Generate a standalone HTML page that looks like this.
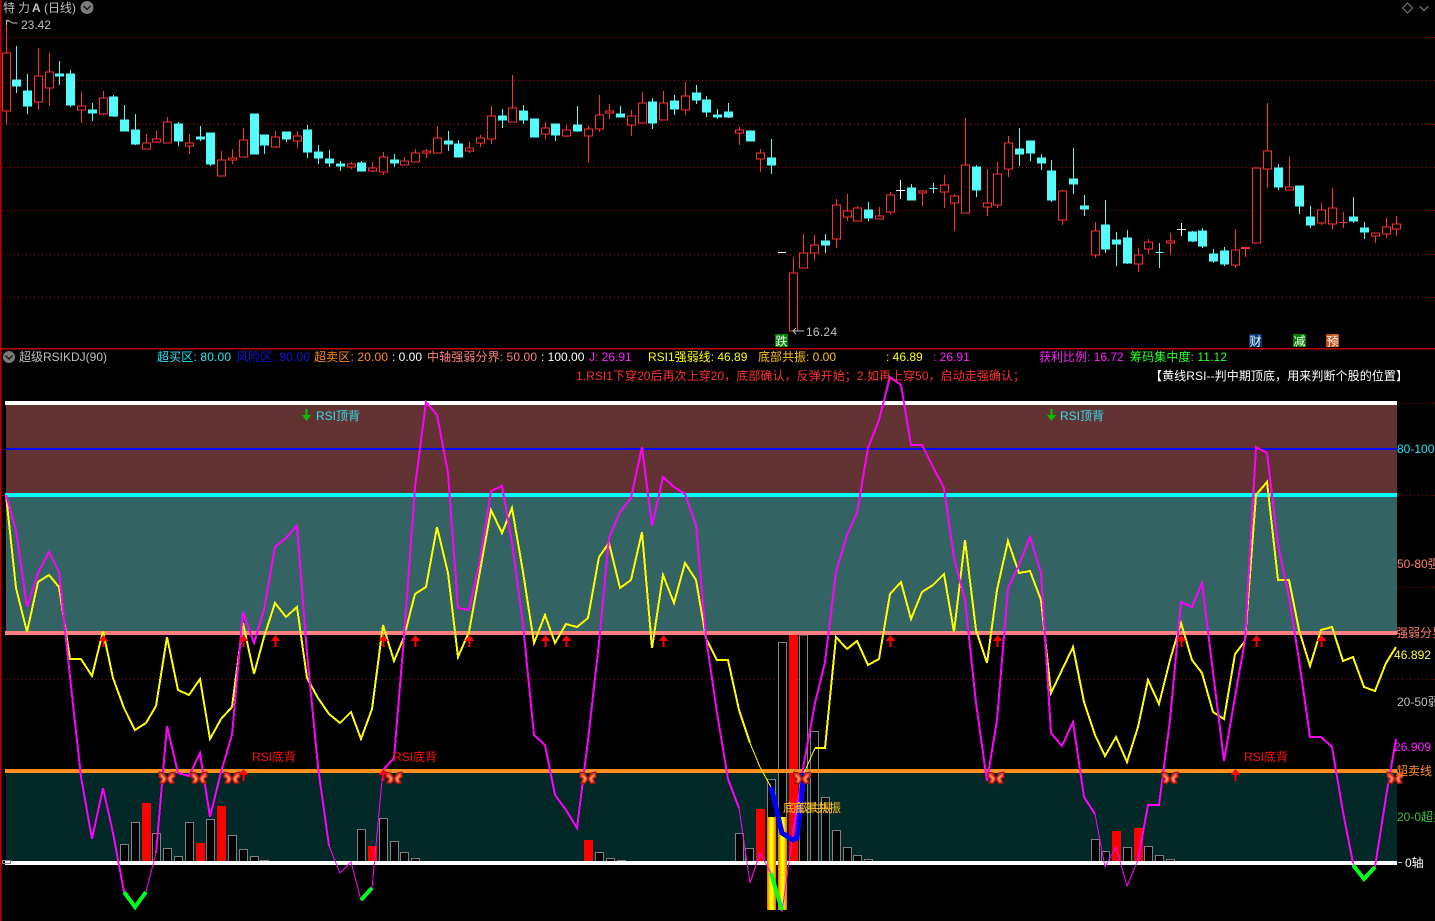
<!DOCTYPE html>
<html lang="zh">
<head>
<meta charset="utf-8">
<title>超级RSIKDJ</title>
<style>
html,body{margin:0;padding:0;background:#000;width:1435px;height:921px;overflow:hidden}
svg{display:block;position:absolute;left:0;top:0}
text{font-family:"Liberation Sans","WenQuanYi Zen Hei","Noto Sans CJK SC",sans-serif;font-size:12px;white-space:pre}
.c path,.c line,.c polyline,.c rect{shape-rendering:crispEdges}
polyline{fill:none;stroke-linejoin:miter}
</style>
</head>
<body>
<svg width="1435" height="921" viewBox="0 0 1435 921" xmlns="http://www.w3.org/2000/svg">
<defs>
<linearGradient id="gold" x1="0" x2="1" y1="0" y2="0">
<stop offset="0" stop-color="#d87000"/><stop offset=".2" stop-color="#ffb000"/><stop offset=".4" stop-color="#ffff00"/><stop offset=".6" stop-color="#ffff00"/><stop offset=".8" stop-color="#ffb000"/><stop offset="1" stop-color="#d87000"/>
</linearGradient>
<g id="b">
<path d="M0 0L-3 -5L-8 -6L-8.500 -1L-5.500 1L-7.500 5L-3 6L0 2Z M0 0L3 -5L8 -6L8.500 -1L5.500 1L7.500 5L3 6L0 2Z" fill="#e0361e" stroke="#8a1410" stroke-width="1"/>
<path d="M-1.500 0L-6 -4L-6.500 -2L-4 .5L-5 3.500L-3 4Z M1.500 0L6 -4L6.500 -2L4 .5L5 3.500L3 4Z" fill="#ff8a66"/>
</g>
<path id="u" d="M0 0L5 6H1V12H-1V6H-5Z" fill="#ff0000"/>
</defs>
<rect width="1435" height="921" fill="#000"/>
<g class="c">
<!-- upper grid -->
<g stroke="#a81010" stroke-width="1" stroke-dasharray="1 3">
<line x1="2" x2="1435" y1="37.500" y2="37.500"/>
<line x1="2" x2="1435" y1="80.500" y2="80.500"/>
<line x1="2" x2="1435" y1="124.500" y2="124.500"/>
<line x1="2" x2="1435" y1="167.500" y2="167.500"/>
<line x1="2" x2="1435" y1="210.500" y2="210.500"/>
<line x1="2" x2="1435" y1="254.500" y2="254.500"/>
<line x1="2" x2="1435" y1="297.500" y2="297.500"/>
</g>
<!-- red candles -->
<path fill="#000" stroke="#ff3232" stroke-width="1" d="M6.500 20V53M6.500 111V124M2.500 53h8V111h-8Z
M38.500 48V76M38.500 102V110M34.500 76h8V102h-8Z
M49.500 53V72M49.500 88V106M45.500 72h8V88h-8Z
M81.500 92V106M81.500 110V123M77.500 106h8V110h-8Z
M103.500 91V98M103.500 114V115M99.500 98h8V114h-8Z
M146.500 134V143M142.500 143h8V149h-8Z
M156.500 131V139M156.500 142V143M152.500 139h8V142h-8Z
M167.500 117V122M163.500 122h8V143h-8Z
M189.500 134V143M189.500 146V154M185.500 143h8V146h-8Z
M221.500 151V160M217.500 160h8V176h-8Z
M232.500 149V158M232.500 160V164M228.500 158h8V160h-8Z
M243.500 128V140M239.500 140h8V157h-8Z
M275.500 131V137M275.500 147V148M271.500 137h8V147h-8Z
M297.500 131V136M297.500 141V148M293.500 136h8V141h-8Z
M351.500 162V164M351.500 167V169M347.500 164h8V167h-8Z
M372.500 162V168M372.500 171V172M368.500 168h8V171h-8Z
M383.500 152V157M383.500 172V175M379.500 157h8V172h-8Z
M404.500 157V161M400.500 161h8V165h-8Z
M415.500 149V153M411.500 153h8V162h-8Z
M426.500 149V151M426.500 153V158M422.500 151h8V153h-8Z
M437.500 126V138M433.500 138h8V153h-8Z
M469.500 142V148M469.500 151V153M465.500 148h8V151h-8Z
M480.500 135V138M480.500 143V147M476.500 138h8V143h-8Z
M491.500 106V116M491.500 139V144M487.500 116h8V139h-8Z
M512.500 75V108M508.500 108h8V122h-8Z
M545.500 122V128M545.500 134V139M541.500 128h8V134h-8Z
M566.500 125V130M566.500 136V137M562.500 130h8V136h-8Z
M588.500 126V129M588.500 136V163M584.500 129h8V136h-8Z
M599.500 95V115M599.500 129V132M595.500 115h8V129h-8Z
M609.500 104V111M609.500 113V119M605.500 111h8V113h-8Z
M631.500 110V116M631.500 125V136M627.500 116h8V125h-8Z
M642.500 92V103M638.500 103h8V123h-8Z
M663.500 91V103M659.500 103h8V120h-8Z
M685.500 82V96M685.500 110V115M681.500 96h8V110h-8Z
M739.500 127V130M739.500 133V145M735.500 130h8V133h-8Z
M760.500 149V153M760.500 159V172M756.500 153h8V159h-8Z
M793.500 257V273M789.500 273h8V331h-8Z
M803.500 234V253M799.500 253h8V268h-8Z
M814.500 235V245M814.500 253V260M810.500 245h8V253h-8Z
M836.500 199V205M836.500 239V248M832.500 205h8V239h-8Z
M847.500 194V211M847.500 217V221M843.500 211h8V217h-8Z
M857.500 206V208M853.500 208h8V221h-8Z
M879.500 207V216M875.500 216h8V219h-8Z
M890.500 192V195M890.500 212V215M886.500 195h8V212h-8Z
M922.500 190V191M922.500 193V206M918.500 191h8V193h-8Z
M944.500 175V185M944.500 192V208M940.500 185h8V192h-8Z
M954.500 194V196M954.500 203V231M950.500 196h8V203h-8Z
M965.500 118V165M961.500 165h8V213h-8Z
M987.500 169V203M987.500 207V216M983.500 203h8V207h-8Z
M997.500 162V174M997.500 205V208M993.500 174h8V205h-8Z
M1008.500 136V143M1008.500 169V177M1004.500 143h8V169h-8Z
M1062.500 190V191M1062.500 220V225M1058.500 191h8V220h-8Z
M1095.500 222V231M1095.500 255V258M1091.500 231h8V255h-8Z
M1138.500 248V255M1138.500 264V272M1134.500 255h8V264h-8Z
M1148.500 239V242M1148.500 249V254M1144.500 242h8V249h-8Z
M1170.500 233V241M1170.500 243V255M1166.500 241h8V243h-8Z
M1235.500 229V250M1235.500 265V268M1231.500 250h8V265h-8Z
M1256.500 168V168M1252.500 168h8V243h-8Z
M1267.500 103V151M1267.500 169V188M1263.500 151h8V169h-8Z
M1289.500 157V187M1285.500 187h8V190h-8Z
M1321.500 203V210M1321.500 223V225M1317.500 210h8V223h-8Z
M1332.500 188V208M1332.500 224V229M1328.500 208h8V224h-8Z
M1375.500 236V243M1371.500 233h8V236h-8Z
M1386.500 218V227M1386.500 234V238M1382.500 227h8V234h-8Z
M1396.500 216V224M1396.500 229V236M1392.500 224h8V229h-8Z
M1245.500 249V257M1241.500 247.500h8V248.500h-8Z
M1343.500 212V228M1339.500 222.500h8"/>
<!-- cyan candles -->
<path fill="#54fcfc" stroke="#54fcfc" stroke-width="1" d="M16.500 46V93M12.500 80h8V86h-8Z
M27.500 74V114M23.500 91h8V106h-8Z
M59.500 61V85M55.500 74h8V76h-8Z
M70.500 70V107M66.500 74h8V105h-8Z
M92.500 103V121M88.500 110h8V113h-8Z
M113.500 95V117M109.500 97h8V116h-8Z
M124.500 105V131M120.500 120h8V131h-8Z
M135.500 114V145M131.500 130h8V144h-8Z
M178.500 122V146M174.500 124h8V141h-8Z
M200.500 126V141M196.500 137h8V139h-8Z
M210.500 133V166M206.500 133h8V164h-8Z
M254.500 114V154M250.500 114h8V154h-8Z
M264.500 135V154M260.500 135h8V145h-8Z
M286.500 132V142M282.500 132h8V139h-8Z
M307.500 125V158M303.500 130h8V152h-8Z
M318.500 145V164M314.500 152h8V158h-8Z
M329.500 150V167M325.500 159h8V163h-8Z
M340.500 161V171M336.500 164h8V166h-8Z
M361.500 161V171M357.500 163h8V171h-8Z
M394.500 154V167M390.500 160h8V163h-8Z
M448.500 131V151M444.500 141h8V144h-8Z
M458.500 140V157M454.500 144h8V157h-8Z
M502.500 109V128M498.500 116h8V120h-8Z
M523.500 105V124M519.500 111h8V120h-8Z
M534.500 119V137M530.500 119h8V137h-8Z
M555.500 124V141M551.500 124h8V135h-8Z
M577.500 106V132M573.500 125h8V131h-8Z
M620.500 106V117M616.500 114h8V117h-8Z
M652.500 98V129M648.500 102h8V123h-8Z
M674.500 95V115M670.500 101h8V109h-8Z
M696.500 85V104M692.500 93h8V100h-8Z
M706.500 96V117M702.500 100h8V112h-8Z
M717.500 109V119M713.500 115h8V117h-8Z
M728.500 103V118M724.500 112h8V117h-8Z
M750.500 130V141M746.500 131h8V141h-8Z
M771.500 139V174M767.500 158h8V165h-8Z
M825.500 234V253M821.500 241h8V245h-8Z
M868.500 202V221M864.500 210h8V218h-8Z
M911.500 184V200M907.500 188h8V200h-8Z
M933.500 183V193M929.500 188.500h8
M976.500 165V197M972.500 167h8V190h-8Z
M1019.500 128V166M1015.500 149h8V154h-8Z
M1030.500 141V161M1026.500 141h8V153h-8Z
M1041.500 154V170M1037.500 158h8V163h-8Z
M1051.500 160V202M1047.500 171h8V200h-8Z
M1073.500 148V194M1069.500 179h8V184h-8Z
M1084.500 195V216M1080.500 206h8V209h-8Z
M1105.500 200V253M1101.500 225h8V249h-8Z
M1116.500 232V266M1112.500 240h8V244h-8Z
M1127.500 230V264M1123.500 238h8V263h-8Z
M1159.500 243V268M1155.500 252.500h8
M1192.500 231V242M1188.500 232h8V241h-8Z
M1202.500 228V248M1198.500 231h8V246h-8Z
M1213.500 249V263M1209.500 254h8V261h-8Z
M1224.500 247V266M1220.500 251h8V264h-8Z
M1278.500 164V190M1274.500 168h8V187h-8Z
M1299.500 186V214M1295.500 186h8V206h-8Z
M1310.500 206V228M1306.500 217h8V225h-8Z
M1353.500 197V223M1349.500 217h8V221h-8Z
M1364.500 222V239M1360.500 228h8V232h-8Z"/>
<!-- white doji -->
<path fill="none" stroke="#ffffff" stroke-width="1" d="M778 252.500h8M900.500 180V199M896 190.500h9M1181.500 223V236M1177 229.500h9"/>

<!-- frame lines -->
<rect x="0" y="0" width="1.500" height="921" fill="#c00000"/>
<rect x="0" y="348" width="1435" height="1.500" fill="#c00000"/>

<!-- bands -->
<rect x="6" y="405" width="1391" height="88" fill="#633333"/>
<rect x="6" y="497" width="1391" height="134" fill="#336363"/>
<rect x="6" y="773" width="1391" height="88" fill="#032828"/>
<g stroke="#8a1010" stroke-width="1" stroke-dasharray="1 3">
<line x1="2" x2="1397" y1="679.500" y2="679.500" stroke="#7a1010"/>
<line x1="1398" x2="1435" y1="403.500" y2="403.500"/>
<line x1="1398" x2="1435" y1="495.500" y2="495.500"/>
<line x1="1398" x2="1435" y1="587.500" y2="587.500"/>
<line x1="1398" x2="1435" y1="679.500" y2="679.500"/>
</g>

<!-- histogram: gray -->
<path fill="#000" stroke="#808080" stroke-width="1" d="M120.500 861V844.500h8V861M131.500 861V822.500h8V861M152.500 861V833.500h8V861M163.500 861V848.500h8V861M174.500 861V856.500h8V861M185.500 861V822.500h8V861M206.500 861V819.500h8V861M228.500 861V835.500h8V861M239.500 861V849.500h8V861M250.500 861V856.500h8V861M260.500 861V860.500h8V861
M357.500 861V829.500h8V861M379.500 861V818.500h8V861M390.500 861V841.500h8V861M400.500 861V852.500h8V861M411.500 861V858.500h8V861
M595.500 861V852.500h8V861M606.500 861V858.500h8V861M617.500 861V860.500h8V861
M735.500 861V833.500h8V861M745.500 861V848.500h8V861M767.500 861V779.500h8V861M778.500 861V642.500h8V861M799.500 861V635h8V861M810.500 861V731.500h8V861M821.500 861V797.500h8V861M832.500 861V830.500h8V861M843.500 861V847.500h8V861M853.500 861V855.500h8V861M864.500 861V859.500h8V861
M1091.500 861V839.500h8V861M1101.500 861V851.500h8V861M1123.500 861V847.500h8V861M1144.500 861V846.500h8V861M1155.500 861V855.500h8V861M1166.500 861V859.500h8V861"/>
<!-- histogram: red -->
<g fill="#ff0000">
<rect x="142" y="803" width="9" height="58"/>
<rect x="196" y="843" width="9" height="18"/>
<rect x="217" y="806" width="9" height="55"/>
<rect x="368" y="846" width="9" height="15"/>
<rect x="584" y="840" width="9" height="21"/>
<rect x="756" y="809" width="9" height="52"/>
<rect x="789" y="635" width="9" height="226"/>
<rect x="1112" y="831" width="9" height="30"/>
<rect x="1134" y="828" width="9" height="33"/>
</g>

<!-- level lines -->
<rect x="5" y="401" width="1392" height="4" fill="#ffffff"/>
<rect x="6" y="448" width="1391" height="2" fill="#0000ff"/>
<rect x="5" y="493" width="1392" height="4" fill="#00ffff"/>
<rect x="5" y="631" width="1392" height="4" fill="#ff8080"/>
<rect x="5" y="769" width="1392" height="4" fill="#ff9020"/>
<rect x="5" y="861" width="1392" height="4" fill="#ffffff"/>
<rect x="2.500" y="860.500" width="8" height="3" fill="none" stroke="#808080"/>
<rect x="1398" y="862" width="4" height="1" fill="#c0c0c0"/>
<rect x="2" y="495" width="1" height="1" fill="#c00000"/><rect x="2" y="587" width="1" height="1" fill="#c00000"/><rect x="2" y="771" width="1" height="1" fill="#c00000"/>

<!-- gold bars -->
<rect x="767" y="817" width="9" height="93" fill="url(#gold)"/>
<rect x="778" y="817" width="9" height="93" fill="url(#gold)"/>

<!-- yellow line -->
<g stroke="#ffff00">
<polyline stroke-width="2" points="6,495 16,588 27,632 38,582 49,575 59,587 70,659 81,659 92,676 103,631 113,678 124,708 135,730 146,723 156,706 167,637 178,690 189,695 200,679 210,739 221,719 232,707 243,623 254,674 264,637 275,603 286,617 297,607 307,678 318,698 329,714 340,723 351,712 361,739 372,709 383,625 394,661 404,637 415,594 426,587 437,527 448,573 458,657 469,632 480,571 491,510 502,533 512,508 523,572 534,643 545,615 555,643 566,624 577,627 588,618 599,557 609,543 620,588 631,580 642,532 652,648 663,575 674,603 685,563 696,580 706,638 717,660 728,660 739,710 750,743"/>
<polyline stroke-width="1" points="750,743 760,767 771,787"/>
<polyline stroke-width="1" points="804,773 815,748"/>
<polyline stroke-width="2" points="815,748 825,748 836,637 847,649 857,641 868,665 879,659 890,594 901,582 911,619 922,592 933,585 944,574 954,632 965,540 976,630 987,663 997,590 1008,541 1019,573 1030,571 1041,600 1051,693 1062,670 1073,647 1084,702 1095,735 1105,756 1116,737 1127,762 1138,727 1148,680 1159,704 1170,660 1181,623 1192,660 1202,673 1213,712 1224,719 1235,654 1245,641 1256,495 1267,482 1278,580 1289,580 1299,630 1310,666 1321,630 1332,627 1343,661 1353,657 1364,687 1375,691 1386,663 1396,647"/>
</g>

<!-- magenta line -->
<g stroke="#ff00ff">
<polyline stroke-width="2" points="6,495 16,530 27,607 38,573 49,552 59,572 70,677 81,777 92,839 103,788 113,833 124,892"/>
<polyline stroke-width="1" points="124,892 135,908 146,892 156,853"/>
<polyline stroke-width="2" points="156,853 167,726 178,773 189,776 200,753 210,817 221,772 232,735 243,612 254,643 264,610 275,547 286,538 297,526 307,653 318,767 329,846"/>
<polyline stroke-width="1" points="329,846 340,873 351,862 361,900 372,888 383,770"/>
<polyline stroke-width="2" points="383,770 394,758 404,637 415,487 426,402 437,415 448,473 458,608 469,610 480,560 491,491 502,486 512,542 523,625 534,735 545,745 555,795 566,810 577,828 588,740 599,643 609,538 620,512 631,498 642,447 652,526 663,477 674,487 685,494 696,525 706,637 717,713 728,779 739,808"/>
<polyline stroke-width="1" points="739,808 750,883 760,853 771,873 782,912 793,833"/>
<polyline stroke-width="2" points="793,833 804,763 815,703 825,662 836,572 847,535 857,513 868,448 879,420 890,377 901,385 911,445 922,445 933,467 944,488 954,558 965,600 976,703 987,781 997,720 1008,588 1019,565 1030,537 1041,573 1051,733 1062,746 1073,722 1084,797 1095,814"/>
<polyline stroke-width="1" points="1095,814 1105,867 1116,847 1127,886 1138,860"/>
<polyline stroke-width="2" points="1138,860 1148,805 1159,805 1170,720 1181,602 1192,607 1202,583 1213,672 1224,761 1235,697 1245,640 1256,447 1267,453 1278,545 1289,597 1299,660 1310,737 1321,737 1332,747 1343,812 1353,863"/>
<polyline stroke-width="1" points="1353,863 1364,880 1375,867"/>
<polyline stroke-width="2" points="1375,867 1386,797 1396,739"/>
</g>

<!-- blue thick segment -->
<polyline stroke="#0000ff" stroke-width="5" points="771,787 782,833 793,840 797,838 804,773"/>

<!-- green thick V -->
<g stroke="#00ff20" stroke-width="4">
<polyline points="124,892 135,907 146,892"/>
<polyline points="361,900 372,888"/>
<polyline points="771,873 782,910"/>
<polyline points="1353,865 1364,879 1375,867"/>
</g>

<!-- green down arrows -->
<path fill="#00c000" d="M305.500 409h2v6h3.500l-4.500 6l-4.500 -6h3.500Z"/>
<path fill="#00c000" d="M1050.500 409h2v6h3.500l-4.500 6l-4.500 -6h3.500Z"/>

<!-- up arrows at pink line -->
<use href="#u" x="103.500" y="635"/><use href="#u" x="243.500" y="635"/><use href="#u" x="275.500" y="635"/><use href="#u" x="383.500" y="635"/><use href="#u" x="415.500" y="635"/><use href="#u" x="469.500" y="635"/><use href="#u" x="545.500" y="635"/><use href="#u" x="566.500" y="635"/><use href="#u" x="663.500" y="635"/><use href="#u" x="890.500" y="635"/><use href="#u" x="997.500" y="635"/><use href="#u" x="1181.500" y="635"/><use href="#u" x="1256.500" y="635"/><use href="#u" x="1321.500" y="635"/>
<!-- up arrows at orange line -->
<use href="#u" x="243.500" y="769"/><use href="#u" x="383.500" y="769"/><use href="#u" x="1235.500" y="769"/>
</g>

<!-- butterflies -->
<use href="#b" x="167" y="778"/><use href="#b" x="199" y="778"/><use href="#b" x="232" y="778"/><use href="#b" x="394" y="778"/><use href="#b" x="588" y="778"/><use href="#b" x="802" y="778"/><use href="#b" x="996" y="778"/><use href="#b" x="1170" y="778"/><use href="#b" x="1395" y="778"/>

<!-- top text -->
<text x="3" y="12" fill="#c0c0c0">特</text><text x="18" y="12" fill="#c0c0c0">力</text><text x="32" y="12" fill="#c0c0c0" font-weight="bold">A</text><text x="44" y="12" fill="#c0c0c0">(日线)</text>
<circle cx="87" cy="7.500" r="6.500" fill="#7c7c7c"/>
<path d="M83.500 6l3.500 3.500l3.500 -3.500" fill="none" stroke="#1a1a1a" stroke-width="1.500"/>
<path d="M1407.500 3l5 5l-5 5l-5 -5Z" fill="none" stroke="#808080"/>
<path d="M1419.500 6l4.500 4.500l4.500 -4.500" fill="none" stroke="#808080" stroke-width="1.200"/>
<path d="M6.500 21V25M6.500 21l2 -1M6.500 21h3l3 2h5" fill="none" stroke="#c0c0c0"/>
<text x="21" y="29" fill="#c0c0c0" textLength="30">23.42</text>
<path d="M793 331h11M793 331l3 -3M793 331l3 3" fill="none" stroke="#c0c0c0"/>
<text x="806" y="336" fill="#c0c0c0" textLength="31">16.24</text>

<!-- tags -->
<rect x="775" y="334" width="13" height="13" fill="#008000"/><text x="775.500" y="345.500" fill="#fff">跌</text>
<rect x="1249" y="334" width="13" height="13" fill="#003a78"/><text x="1249.500" y="345.500" fill="#fff">财</text>
<rect x="1293" y="334" width="13" height="13" fill="#008000"/><text x="1293.500" y="345.500" fill="#fff">减</text>
<rect x="1326" y="334" width="13" height="13" fill="#c05010"/><text x="1326.500" y="345.500" fill="#fff">预</text>

<!-- indicator header -->
<circle cx="9" cy="357" r="6" fill="#7c7c7c"/>
<path d="M5.500 355.500l3.500 3.500l3.500 -3.500" fill="none" stroke="#1a1a1a" stroke-width="1.500"/>
<text x="19" y="361" fill="#c0c0c0">超级RSIKDJ(90)</text>
<text x="157" y="361" fill="#20e8f8" textLength="74">超买区: 80.00</text>
<text x="236" y="361" fill="#1414e0" textLength="74">风险区: 90.00</text>
<text x="314" y="361" fill="#ff8c20" textLength="74">超卖区: 20.00</text>
<text x="392" y="361" fill="#ffffff">: 0.00</text>
<text x="427" y="361" fill="#ff8080" textLength="110">中轴强弱分界: 50.00</text>
<text x="541" y="361" fill="#ffffff">: 100.00</text>
<text x="589" y="361" fill="#ff20ff">J: 26.91</text>
<text x="648" y="361" fill="#ffff00">RSI1强弱线: 46.89</text>
<text x="758" y="361" fill="#ffc020">底部共振: 0.00</text>
<text x="886" y="361" fill="#ffff00">: 46.89</text>
<text x="933" y="361" fill="#ff20ff">: 26.91</text>
<text x="1039" y="361" fill="#ff20ff">获利比例: 16.72</text>
<text x="1130" y="361" fill="#30ff30" textLength="97">筹码集中度: 11.12</text>
<text x="576" y="380" fill="#ff3232" textLength="449">1.RSI1下穿20后再次上穿20，底部确认，反弹开始；2.如再上穿50，启动走强确认；</text>
<text x="1150" y="380" fill="#ffffff" textLength="258">【黄线RSI--判中期顶底，用来判断个股的位置】</text>

<!-- chart annotations -->
<text x="316" y="420" fill="#30e0f0">RSI顶背</text>
<text x="1060" y="420" fill="#30e0f0">RSI顶背</text>
<text x="252" y="761" fill="#ff1010">RSI底背</text>
<text x="393" y="761" fill="#ff1010">RSI底背</text>
<text x="1244" y="761" fill="#ff1010">RSI底背</text>
<text x="783" y="812" fill="#ffc020">底部共振</text>
<text x="793" y="812" fill="#ffc020">底部共振</text>

<!-- right axis -->
<text x="1397" y="453" fill="#20e8f8">80-100</text>
<text x="1397" y="568" fill="#ff8070">50-80强</text>
<text x="1396" y="637" fill="#ff8070">强弱分界</text>
<text x="1394" y="659" fill="#ffff40" textLength="37">46.892</text>
<text x="1397" y="706" fill="#c0c0c0">20-50弱</text>
<text x="1394" y="751" fill="#ff20ff" textLength="37">26.909</text>
<text x="1396" y="775" fill="#ff9020">超卖线</text>
<text x="1397" y="821" fill="#40c040">20-0超卖</text>
<text x="1405" y="867" fill="#ffffff">0轴</text>
</svg>
</body>
</html>
